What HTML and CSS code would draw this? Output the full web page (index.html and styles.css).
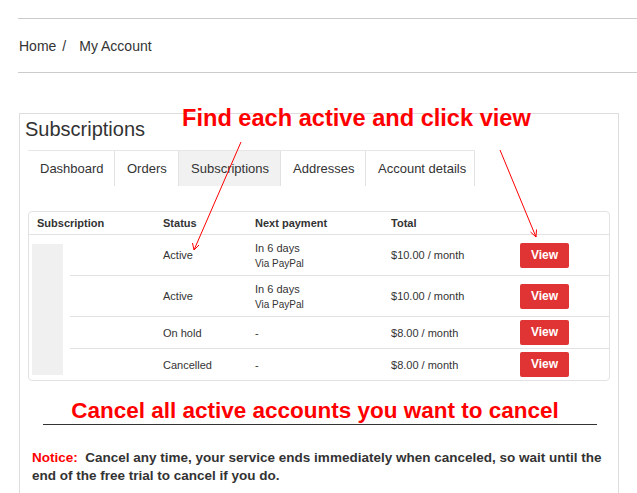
FILE: index.html
```html
<!DOCTYPE html>
<html>
<head>
<meta charset="utf-8">
<link rel="stylesheet" href="styles.css">
</head>
<body>
<div class="page">
  <nav class="crumbs"><span>Home</span><span class="sep">/</span><span>My Account</span></nav>

  <section class="box">
    <h2 class="title">Subscriptions</h2>
    <ul class="tabs">
      <li class="tab">Dashboard</li>
      <li class="tab">Orders</li>
      <li class="tab active">Subscriptions</li>
      <li class="tab">Addresses</li>
      <li class="tab">Account details</li>
    </ul>

    <div class="tablewrap">
      <table class="subs">
        <colgroup>
          <col class="c-thumb"><col class="c-name"><col class="c-status"><col class="c-next"><col class="c-total"><col class="c-act">
        </colgroup>
        <thead>
          <tr><th colspan="2" class="first">Subscription</th><th>Status</th><th>Next payment</th><th>Total</th><th></th></tr>
        </thead>
        <tbody>
          <tr class="tall">
            <td rowspan="4" class="thumb"><div class="ph"></div></td>
            <td></td><td>Active</td>
            <td><div>In 6 days</div><div class="via">Via PayPal</div></td>
            <td>$10.00 / month</td><td><span class="btn">View</span></td>
          </tr>
          <tr class="tall sep-row">
            <td></td><td>Active</td>
            <td><div>In 6 days</div><div class="via">Via PayPal</div></td>
            <td>$10.00 / month</td><td><span class="btn">View</span></td>
          </tr>
          <tr class="short sep-row">
            <td></td><td>On hold</td><td>-</td><td>$8.00 / month</td><td><span class="btn">View</span></td>
          </tr>
          <tr class="short sep-row">
            <td></td><td>Cancelled</td><td>-</td><td>$8.00 / month</td><td><span class="btn">View</span></td>
          </tr>
        </tbody>
      </table>
    </div>

    <h3 class="cancel">Cancel all active accounts you want to cancel</h3>
    <p class="notice"><span class="nlabel">Notice:</span>&nbsp; Cancel any time, your service ends immediately when canceled, so wait until the end of the free trial to cancel if you do.</p>
  </section>

  <div class="find">Find each active and click view</div>
  <svg class="arrows" width="637" height="493" viewBox="0 0 637 493">
    <g stroke="#f00" stroke-width="1" fill="none">
      <line x1="241" y1="142" x2="194" y2="250"/>
      <polyline points="192.5,243 194,250 199,245"/>
      <line x1="500" y1="150" x2="536" y2="237"/>
      <polyline points="530.5,232 536,237 536.5,229.5"/>
    </g>
  </svg>
</div>
</body>
</html>
```

FILE: styles.css
```css
html, body {
  margin: 0;
  padding: 0;
  background: #fff;
}
body {
  font-family: "Liberation Sans", Arial, sans-serif;
  color: #333;
}
.page {
  position: relative;
  width: 637px;
  height: 493px;
  overflow: hidden;
  padding-top: 18px;
  box-sizing: border-box;
}
.crumbs {
  margin-left: 18px;
  border-top: 1px solid #ccc;
  border-bottom: 1px solid #ccc;
  height: 53px;
  line-height: 55px;
  font-size: 14px;
  padding-left: 1px;
  color: #333;
}
.sep {
  margin: 0 13px 0 6px;
}
.box {
  margin: 40px 0 0 19px;
  width: 600px;
  height: 420px;
  box-sizing: border-box;
  border: 1px solid #ddd;
  padding: 3px 0 0 0;
}
.title {
  margin: 0 0 9px 5px;
  font-size: 20px;
  line-height: 24px;
  font-weight: normal;
  color: #333;
}
.tabs {
  list-style: none;
  margin: 0 0 0 8px;
  padding: 0;
  display: flex;
  width: 447px;
  border-top: 1px solid #e6e6e6;
  height: 36px;
  box-sizing: border-box;
}
.tab {
  padding: 0 12px;
  font-size: 13px;
  line-height: 35px;
  color: #333;
  border-right: 1px solid #e2e2e2;
  box-sizing: border-box;
  white-space: nowrap;
  flex: none;
}
.tab:first-child { width: 87px; }
.tab:nth-child(2) { width: 64px; }
.tab:nth-child(3) { width: 102px; }
.tab:nth-child(4) { width: 85px; }
.tab:nth-child(5) { width: 109px; }
.tab.active { background: #f1f1f1; }

.tablewrap {
  margin: 25px 0 0 8px;
  width: 582px;
  border: 1px solid #e2e2e2;
  border-radius: 4px;
  box-sizing: border-box;
  overflow: hidden;
}
.subs {
  width: 580px;
  border-collapse: collapse;
  table-layout: fixed;
  font-size: 11px;
  color: #333;
}
.c-thumb { width: 41px; }
.c-name { width: 85px; }
.c-status { width: 92px; }
.c-next { width: 136px; }
.c-total { width: 129px; }
.c-act { width: 97px; }
.subs th {
  text-align: left;
  font-weight: bold;
  height: 22px;
  padding: 0 0 0 8px;
  border-bottom: 1px solid #e2e2e2;
  font-size: 11px;
}
.subs th.first { padding-left: 8px; }
.subs td {
  padding: 0 0 0 8px;
  vertical-align: middle;
  text-align: left;
}
.subs tr.tall td { height: 40px; }
.subs tr.short td { height: 31px; }
.subs tr.sep-row td { border-top: 1px solid #e2e2e2; }
.subs td.thumb {
  vertical-align: top;
  padding: 9px 0 0 3px;
  height: auto;
}
.ph {
  width: 31px;
  height: 131px;
  background: #f0f0f0;
}
.in6 { }
.via {
  font-size: 10px;
  margin-top: 4px;
}
.btn {
  display: inline-block;
  width: 49px;
  height: 25px;
  line-height: 25px;
  text-align: center;
  background: #e03434;
  color: #fff;
  font-weight: bold;
  font-size: 12px;
  border-radius: 2px;
}
.cancel {
  margin: 16px 21px 0 23px;
  text-align: center;
  color: #f00;
  font-size: 22.5px;
  line-height: 27px;
  font-weight: bold;
  border-bottom: 1px solid #333;
  padding-right: 10px;
}
.notice {
  margin: 24px 10px 0 12px;
  font-size: 13.5px;
  line-height: 18px;
  font-weight: bold;
  color: #333;
}
.nlabel { color: #f00; }
.find {
  position: absolute;
  left: 182px;
  top: 103px;
  font-size: 23.6px;
  line-height: 30px;
  font-weight: bold;
  color: #f00;
  white-space: nowrap;
}
.arrows {
  position: absolute;
  left: 0;
  top: 0;
  pointer-events: none;
}
```
